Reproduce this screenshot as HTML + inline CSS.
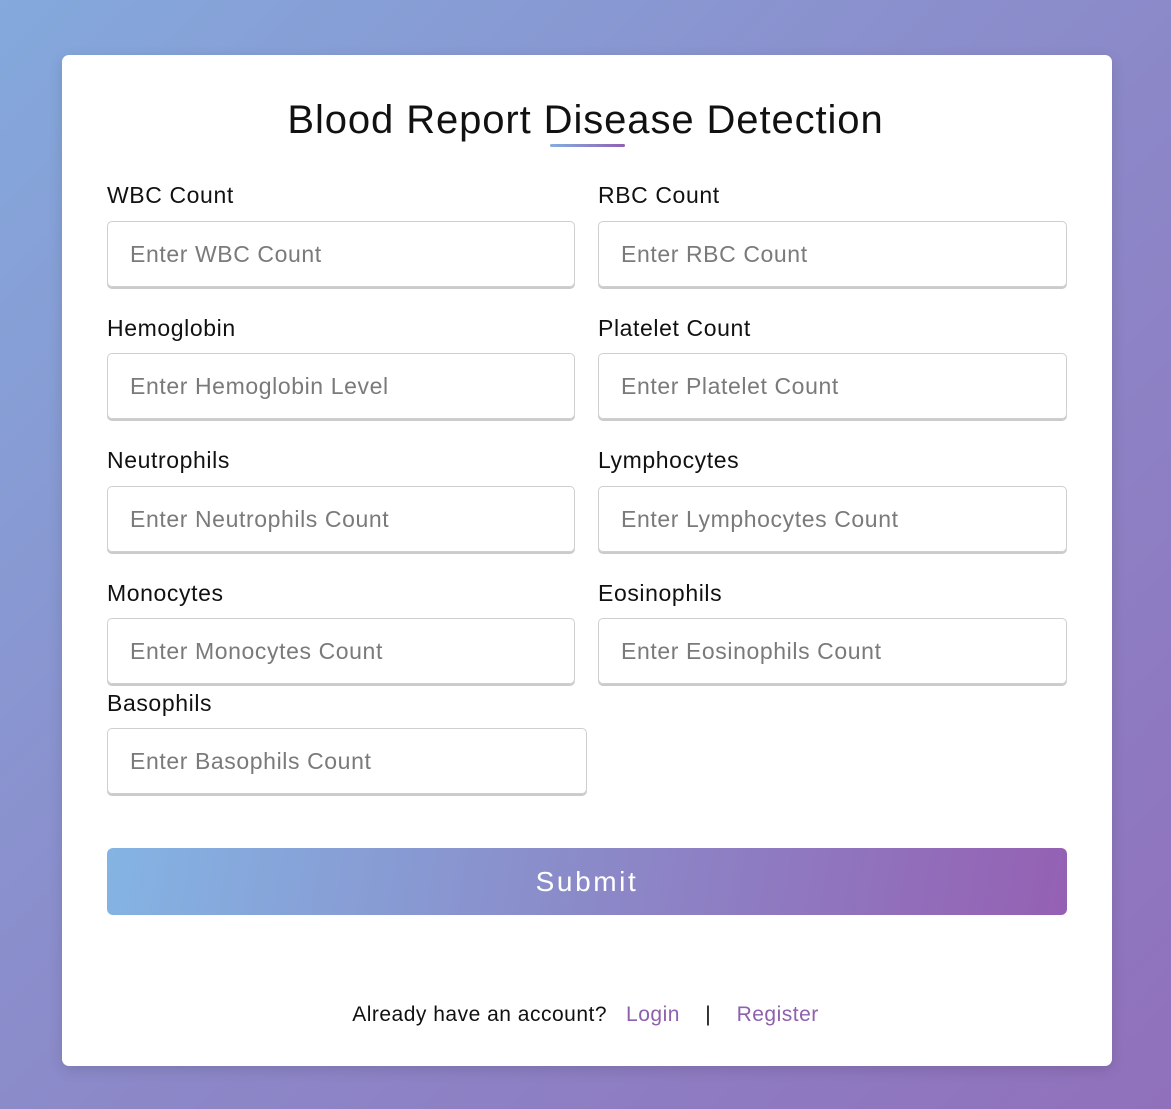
<!DOCTYPE html>
<html><head><meta charset="utf-8"><style>
*{margin:0;padding:0;box-sizing:border-box}
html,body{width:1171px;height:1109px;overflow:hidden}
body{background:linear-gradient(135deg,#84a9dc 0%,#8b8dcb 45%,#9070bb 100%);font-family:"Liberation Sans",sans-serif;position:relative}
.card{position:absolute;left:62px;top:55px;width:1050px;height:1011px;background:#fff;border-radius:7px;box-shadow:0 4px 14px rgba(0,0,0,.12)}
.t{position:absolute;left:0;width:1171px;top:98px;text-align:center;font-size:40px;letter-spacing:0.9px;color:#111;}
.ul{position:absolute;left:550px;top:144px;width:75px;height:3px;border-radius:2px;background:linear-gradient(90deg,#84aee0,#9060b4)}
.l{position:absolute;font-size:23px;letter-spacing:0.6px;color:#111}
.i{position:absolute;height:66px;width:468px;border:1px solid #cfcfcf;border-radius:5px;box-shadow:0 2px 0 #cbcbcb;font-size:23px;letter-spacing:0.6px;color:#7a7a7a;padding-left:22px;line-height:64px}
.b{position:absolute;left:107px;top:848px;width:960px;height:67px;border-radius:6px;background:linear-gradient(100deg,#84b4e3 0%,#8a8ecb 45%,#9560b3 100%);color:#fff;font-size:28px;text-align:center;line-height:67px;letter-spacing:2.6px}
.f{position:absolute;left:0;width:1171px;top:1003px;font-size:21px;letter-spacing:0.5px;color:#111;text-align:center}
.f a{color:#8e60ad;text-decoration:none}
</style></head><body>
<div class="card"></div>
<div class="t">Blood Report Disease Detection</div>
<div class="ul"></div>

<div class="l" style="left:107px;top:182px">WBC Count</div>
<div class="i" style="left:107px;top:221px">Enter WBC Count</div>
<div class="l" style="left:598px;top:182px">RBC Count</div>
<div class="i" style="left:598px;top:221px;width:469px">Enter RBC Count</div>

<div class="l" style="left:107px;top:315px">Hemoglobin</div>
<div class="i" style="left:107px;top:353px">Enter Hemoglobin Level</div>
<div class="l" style="left:598px;top:315px">Platelet Count</div>
<div class="i" style="left:598px;top:353px;width:469px">Enter Platelet Count</div>

<div class="l" style="left:107px;top:447px">Neutrophils</div>
<div class="i" style="left:107px;top:486px">Enter Neutrophils Count</div>
<div class="l" style="left:598px;top:447px">Lymphocytes</div>
<div class="i" style="left:598px;top:486px;width:469px">Enter Lymphocytes Count</div>

<div class="l" style="left:107px;top:580px">Monocytes</div>
<div class="i" style="left:107px;top:618px">Enter Monocytes Count</div>
<div class="l" style="left:598px;top:580px">Eosinophils</div>
<div class="i" style="left:598px;top:618px;width:469px">Enter Eosinophils Count</div>

<div class="l" style="left:107px;top:690px">Basophils</div>
<div class="i" style="left:107px;top:728px;width:480px">Enter Basophils Count</div>

<div class="b">Submit</div>
<div class="f">Already have an account? &nbsp;&nbsp;<a>Login</a>&nbsp;&nbsp;&nbsp;&nbsp;|&nbsp;&nbsp;&nbsp;&nbsp;<a>Register</a></div>
</body></html>
